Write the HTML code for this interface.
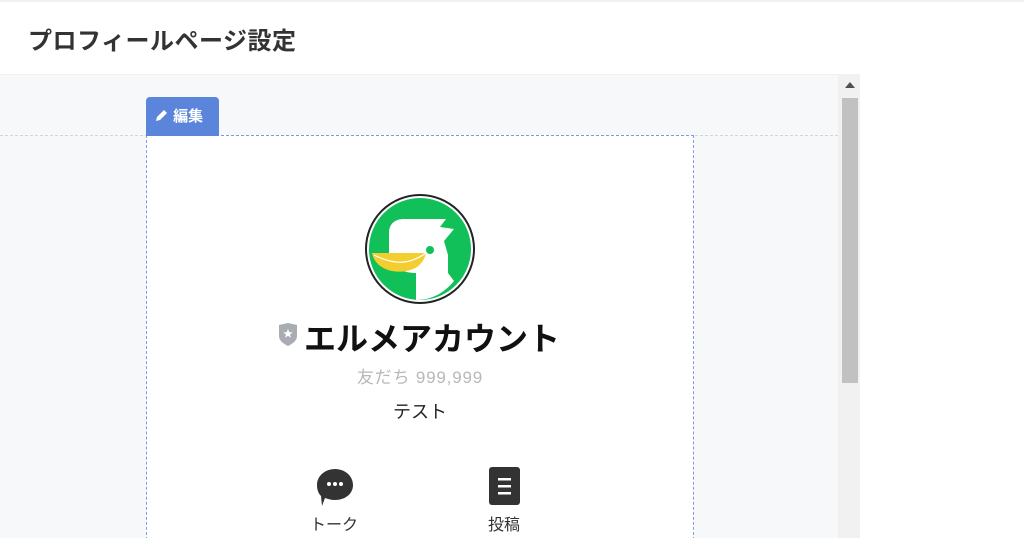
<!DOCTYPE html>
<html><head><meta charset="utf-8"><style>
*{margin:0;padding:0;box-sizing:border-box}
html,body{width:1024px;height:538px;overflow:hidden}
body{background:#fff;font-family:"Liberation Sans","Noto Sans CJK JP",sans-serif;position:relative}
.top{position:absolute;left:0;top:0;width:1024px;height:2px;background:#f1f1f1}
.h{position:absolute;left:28px;top:21px;font-size:24px;font-weight:bold;color:#333;letter-spacing:0.5px}
.area{position:absolute;left:0;top:74px;width:838px;height:464px;background:#f7f8fa;border-top:1px solid #eef0f3}
.dash{position:absolute;left:0;top:135px;width:838px;border-top:1px dashed #cfd3da}
.sb{position:absolute;left:838px;top:74px;width:22px;height:464px;background:#f1f1f1}
.thumb{position:absolute;left:842px;top:98px;width:16px;height:285px;background:#c1c1c1}
.arr{position:absolute;left:845px;top:82px;width:0;height:0;border-left:5px solid transparent;border-right:5px solid transparent;border-bottom:6px solid #505050}
.tab{position:absolute;left:146px;top:97px;width:73px;height:39px;background:#5b84db;border-radius:4px 4px 0 0;color:#fff;font-weight:bold;font-size:15px;padding:8px 0 0 9px}
.card{position:absolute;left:146px;top:135px;width:548px;height:410px;background:#fff;border:1px dashed #7c9be6}
.c{position:absolute;text-align:center;width:100%;left:0}
</style></head><body>
<div class="top"></div>
<div class="h">プロフィールページ設定</div>
<div class="area"></div>
<div class="dash"></div>
<div class="sb"></div><div class="thumb"></div><div class="arr"></div>
<div class="card">
<svg style="position:absolute;left:217px;top:57px" width="112" height="112" viewBox="0 0 112 112">
<circle cx="56" cy="56" r="54" fill="#fff" stroke="#222" stroke-width="2"/>
<circle cx="56" cy="56" r="51" fill="#12c05a"/>
<path d="M52 107 L52 80 C40 80 25 75 25 58 L25 40 C25 30 32 26 40 26 L82 26 L76 34 L90 36 L80 48 L84 62 L84 80 L90 88 C80 100 68 107 52 107Z" fill="#fff"/>
<path d="M8 60 L62 60 C58 78 40 80 28 78 C18 76 10 70 8 60Z" fill="#f4ce2f"/>
<path d="M10 62 C30 72 45 72 62 60" stroke="#fff" stroke-width="1.2" fill="none"/>
<circle cx="66" cy="57" r="4" fill="#12c05a"/>
</svg>
<svg style="position:absolute;left:130px;top:186px" width="22" height="25" viewBox="0 0 22 25"><path d="M2 3 L11 1 L20 3 L20 14 C20 19 15 22 11 24 C7 22 2 19 2 14Z" fill="#a9adb3"/><path d="M11 7 L12.3 10.3 L15.8 10.4 L13 12.5 L14 15.8 L11 13.8 L8 15.8 L9 12.5 L6.2 10.4 L9.7 10.3Z" fill="#fff"/></svg>
<div class="c" style="top:178px;font-size:32px;font-weight:bold;color:#111;padding-left:24px">エルメアカウント</div>
<div class="c" style="top:227px;font-size:17px;color:#b8b8b8;letter-spacing:0.8px">友だち 999,999</div>
<div class="c" style="top:262px;font-size:18px;color:#222">テスト</div>
<svg style="position:absolute;left:168px;top:330px" width="40" height="40" viewBox="0 0 40 40"><path d="M20 3 C30 3 38 10 38 19 C38 28 30 34 20 34 C16 34 13 33 10 32 L7 40 L6 30 C3 27 2 23 2 19 C2 10 10 3 20 3Z" fill="#333"/><circle cx="14" cy="18" r="2" fill="#fff"/><circle cx="20" cy="18" r="2" fill="#fff"/><circle cx="26" cy="18" r="2" fill="#fff"/></svg>
<div style="position:absolute;left:163px;top:375px;font-size:16px;color:#333">トーク</div>
<svg style="position:absolute;left:341px;top:330px" width="34" height="40" viewBox="0 0 34 40"><rect x="1" y="1" width="31" height="38" rx="3" fill="#333"/><rect x="10" y="12" width="13" height="2.5" fill="#fff"/><rect x="10" y="19" width="13" height="2.5" fill="#fff"/><rect x="10" y="26" width="13" height="2.5" fill="#fff"/></svg>
<div style="position:absolute;left:341px;top:375px;font-size:16px;color:#333">投稿</div>
</div>
<div class="tab"><svg width="14" height="14" viewBox="0 0 14 14" style="vertical-align:-1px"><path d="M1 13 L2 9 L9 2 L12 5 L5 12Z" fill="#fff"/></svg> 編集</div>
</body></html>
